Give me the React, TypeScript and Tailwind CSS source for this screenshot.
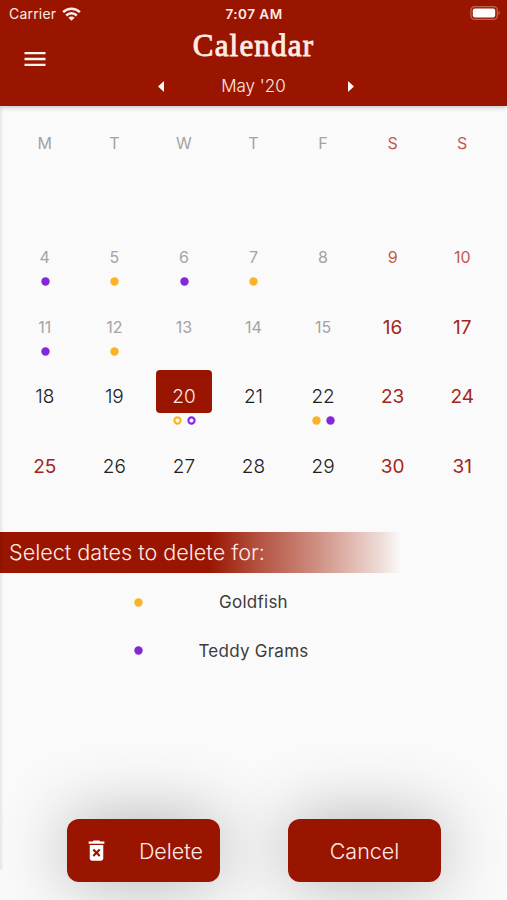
import React, { useState } from "react";
import clsx from "clsx";
import { MdDeleteForever, MdMenu } from "react-icons/md";

type Dot = "gold" | "purple";

interface Day {
  date: number;
  dots?: Dot[];
  past?: boolean;
  holiday?: boolean;
}

const WEEKDAYS = ["M", "T", "W", "T", "F", "S", "S"];

const DAYS: Day[] = [
  { date: 4, past: true, dots: ["purple"] },
  { date: 5, past: true, dots: ["gold"] },
  { date: 6, past: true, dots: ["purple"] },
  { date: 7, past: true, dots: ["gold"] },
  { date: 8, past: true },
  { date: 9, past: true, holiday: true },
  { date: 10, past: true, holiday: true },
  { date: 11, past: true, dots: ["purple"] },
  { date: 12, past: true, dots: ["gold"] },
  { date: 13, past: true },
  { date: 14, past: true },
  { date: 15, past: true },
  { date: 16, holiday: true },
  { date: 17, holiday: true },
  { date: 18 },
  { date: 19 },
  { date: 20, dots: ["gold", "purple"] },
  { date: 21 },
  { date: 22, dots: ["gold", "purple"] },
  { date: 23, holiday: true },
  { date: 24, holiday: true },
  { date: 25, holiday: true },
  { date: 26 },
  { date: 27 },
  { date: 28 },
  { date: 29 },
  { date: 30, holiday: true },
  { date: 31, holiday: true },
];

const DOT_COLORS: Record<Dot, string> = {
  gold: "#fcb225",
  purple: "#8427d8",
};

const PRODUCTS: { name: string; dot: Dot }[] = [
  { name: "Goldfish", dot: "gold" },
  { name: "Teddy Grams", dot: "purple" },
];

function StatusBar() {
  return (
    <div className="grid h-7 grid-cols-3 items-center pl-[9px] pr-[6px] text-[14px]">
      <div className="flex items-center gap-[6px] pb-px tracking-[0.2px]">
        Carrier
        <svg width="19" height="14" viewBox="0 0 19 14" fill="none" stroke="currentColor" strokeWidth="2.5">
          <path d="M1.1 5.1a12 12 0 0 1 16.8 0" />
          <path d="M4.2 8.5a7.6 7.6 0 0 1 10.6 0" />
          <path d="M9.5 13.7 6.4 10.7a4.4 4.4 0 0 1 6.2 0Z" fill="currentColor" stroke="none" />
        </svg>
      </div>
      <div className="-ml-[2px] text-center text-[13.5px] font-semibold tracking-[0.5px]">7:07 AM</div>
      <svg className="mb-[2px] justify-self-end" width="31" height="14" viewBox="0 0 31 14">
        <rect x="0.9" y="0.7" width="26.4" height="12.6" rx="3.6" fill="none" stroke="#bf6457" strokeWidth="1.3" />
        <rect x="2.8" y="2.5" width="22.4" height="9" rx="2" fill="white" />
        <path d="M28.5 4.8a2.4 2.4 0 0 1 0 4.4Z" fill="#bf6457" />
      </svg>
    </div>
  );
}

function EventDot({ color, hollow }: { color: Dot; hollow?: boolean }) {
  return (
    <svg width="9" height="9" viewBox="0 0 9 9">
      {hollow ? (
        <circle cx="4.5" cy="4.5" r="3.1" fill="white" stroke={DOT_COLORS[color]} strokeWidth="2.1" />
      ) : (
        <circle cx="4.5" cy="4.5" r="4.2" fill={DOT_COLORS[color]} />
      )}
    </svg>
  );
}

function DayCell({ day, selected, onSelect }: { day: Day; selected: boolean; onSelect: () => void }) {
  return (
    <button onClick={onSelect} className="flex h-[69.5px] flex-col items-center">
      <span
        className={clsx(
          "flex h-[43px] w-14 shrink-0 items-end justify-center rounded-[4px]",
          day.past ? "pb-[5px] text-[16px]" : "pb-[2px] text-[19px] leading-[28px]",
          selected && "bg-[#991500] font-light text-[#ffe8e2]",
          !selected && day.holiday && (day.past ? "text-[#c25a4e]" : "text-[#a3261a]"),
          !selected && !day.holiday && (day.past ? "text-[#a3a3a3]" : "font-light text-[#202020]")
        )}
      >
        {day.date}
      </span>
      <span className="mt-[3px] flex gap-[4.5px] pl-px">
        {day.dots?.map((dot) => (
          <EventDot key={dot} color={dot} hollow={selected} />
        ))}
      </span>
    </button>
  );
}

export default function App() {
  const [selected, setSelected] = useState(20);

  return (
    <div className="relative flex h-[900px] w-[507px] flex-col overflow-hidden bg-[#fafafa] font-['Inter','Liberation_Sans',sans-serif]">
      <header className="relative z-10 h-[106px] shrink-0 bg-[#991500] text-[#ffebe6] shadow-[0_1px_5px_rgba(0,0,0,0.25)]">
        <StatusBar />
        <div className="grid grid-cols-[80px_1fr_80px]">
          <button aria-label="Menu" className="mt-[17px] ml-[21px] size-7 text-[#fff3ef]">
            <MdMenu size={28} />
          </button>
          <div className="flex flex-col items-center">
            <h1 className="h-9 font-['Liberation_Serif',serif] text-[31px] leading-[35px] font-normal tracking-[1.2px] [-webkit-text-stroke:0.9px_#ffebe6]">
              Calendar
            </h1>
            <div className="mt-[9px] ml-[4px] flex w-[196px] items-center justify-between text-[17px] leading-[26px] font-light">
              <button aria-label="Previous month">
                <svg width="6" height="11" viewBox="0 0 6 11" fill="#fff8f5">
                  <path d="M6 0v11L0 5.5Z" />
                </svg>
              </button>
              <span className="-ml-[4px]">May &apos;20</span>
              <button aria-label="Next month">
                <svg width="6" height="11" viewBox="0 0 6 11" fill="#fff8f5">
                  <path d="M0 0v11l6-5.5Z" />
                </svg>
              </button>
            </div>
          </div>
        </div>
      </header>

      <section className="px-[10px] pt-[25px]">
        <div className="grid h-[100px] grid-cols-7 text-center text-[16px] leading-6 text-[#a3a3a3]">
          {WEEKDAYS.map((name, i) => (
            <span key={i} className={clsx(i > 4 && "text-[#c25a4e]")}>
              {name}
            </span>
          ))}
        </div>
        <div className="grid grid-cols-7">
          {DAYS.map((day) => (
            <DayCell
              key={day.date}
              day={day}
              selected={day.date === selected}
              onSelect={() => setSelected(day.date)}
            />
          ))}
        </div>
      </section>

      <h2 className="mt-[23px] h-[41px] w-[401px] shrink-0 bg-[linear-gradient(to_right,#991500_52%,#b3503f_64%,#cd8a7d_78%,#efdcd8_95%,#fafafa)] pl-[9px] text-[21.6px] leading-[41px] font-light text-[#ffebe6]">
        Select dates to delete for:
      </h2>

      <ul className="mt-[5px] text-[17px] tracking-[0.25px] text-[#3c3c3c]">
        {PRODUCTS.map((product) => (
          <li key={product.name} className="grid h-[48.5px] grid-cols-[133px_1fr_133px] items-center">
            <span className="flex justify-end">
              <span className="-mr-[9.5px] flex">
                <EventDot color={product.dot} />
              </span>
            </span>
            <span className="pt-px text-center">{product.name}</span>
          </li>
        ))}
      </ul>

      <div className="mt-auto mb-[18px] flex gap-[68px] pl-[67px] text-[21.5px] font-light text-[#ffebe6]">
        <button className="flex h-[63px] w-[153px] items-center rounded-[12px] bg-[#991500] pt-px pr-[17px] pl-[16px] shadow-[0_0_70px_rgba(0,0,0,0.3)]">
          <MdDeleteForever size={27} className="mb-px text-white" />
          <span className="ml-auto">Delete</span>
        </button>
        <button className="h-[63px] w-[153px] rounded-[12px] bg-[#991500] pt-px shadow-[0_0_70px_rgba(0,0,0,0.3)]">
          Cancel
        </button>
      </div>

      {/* soft edge of the drawer behind the page */}
      <div className="pointer-events-none absolute top-[106px] left-0 h-[764px] w-1 bg-linear-to-r from-black/8 to-transparent" />
    </div>
  );
}
